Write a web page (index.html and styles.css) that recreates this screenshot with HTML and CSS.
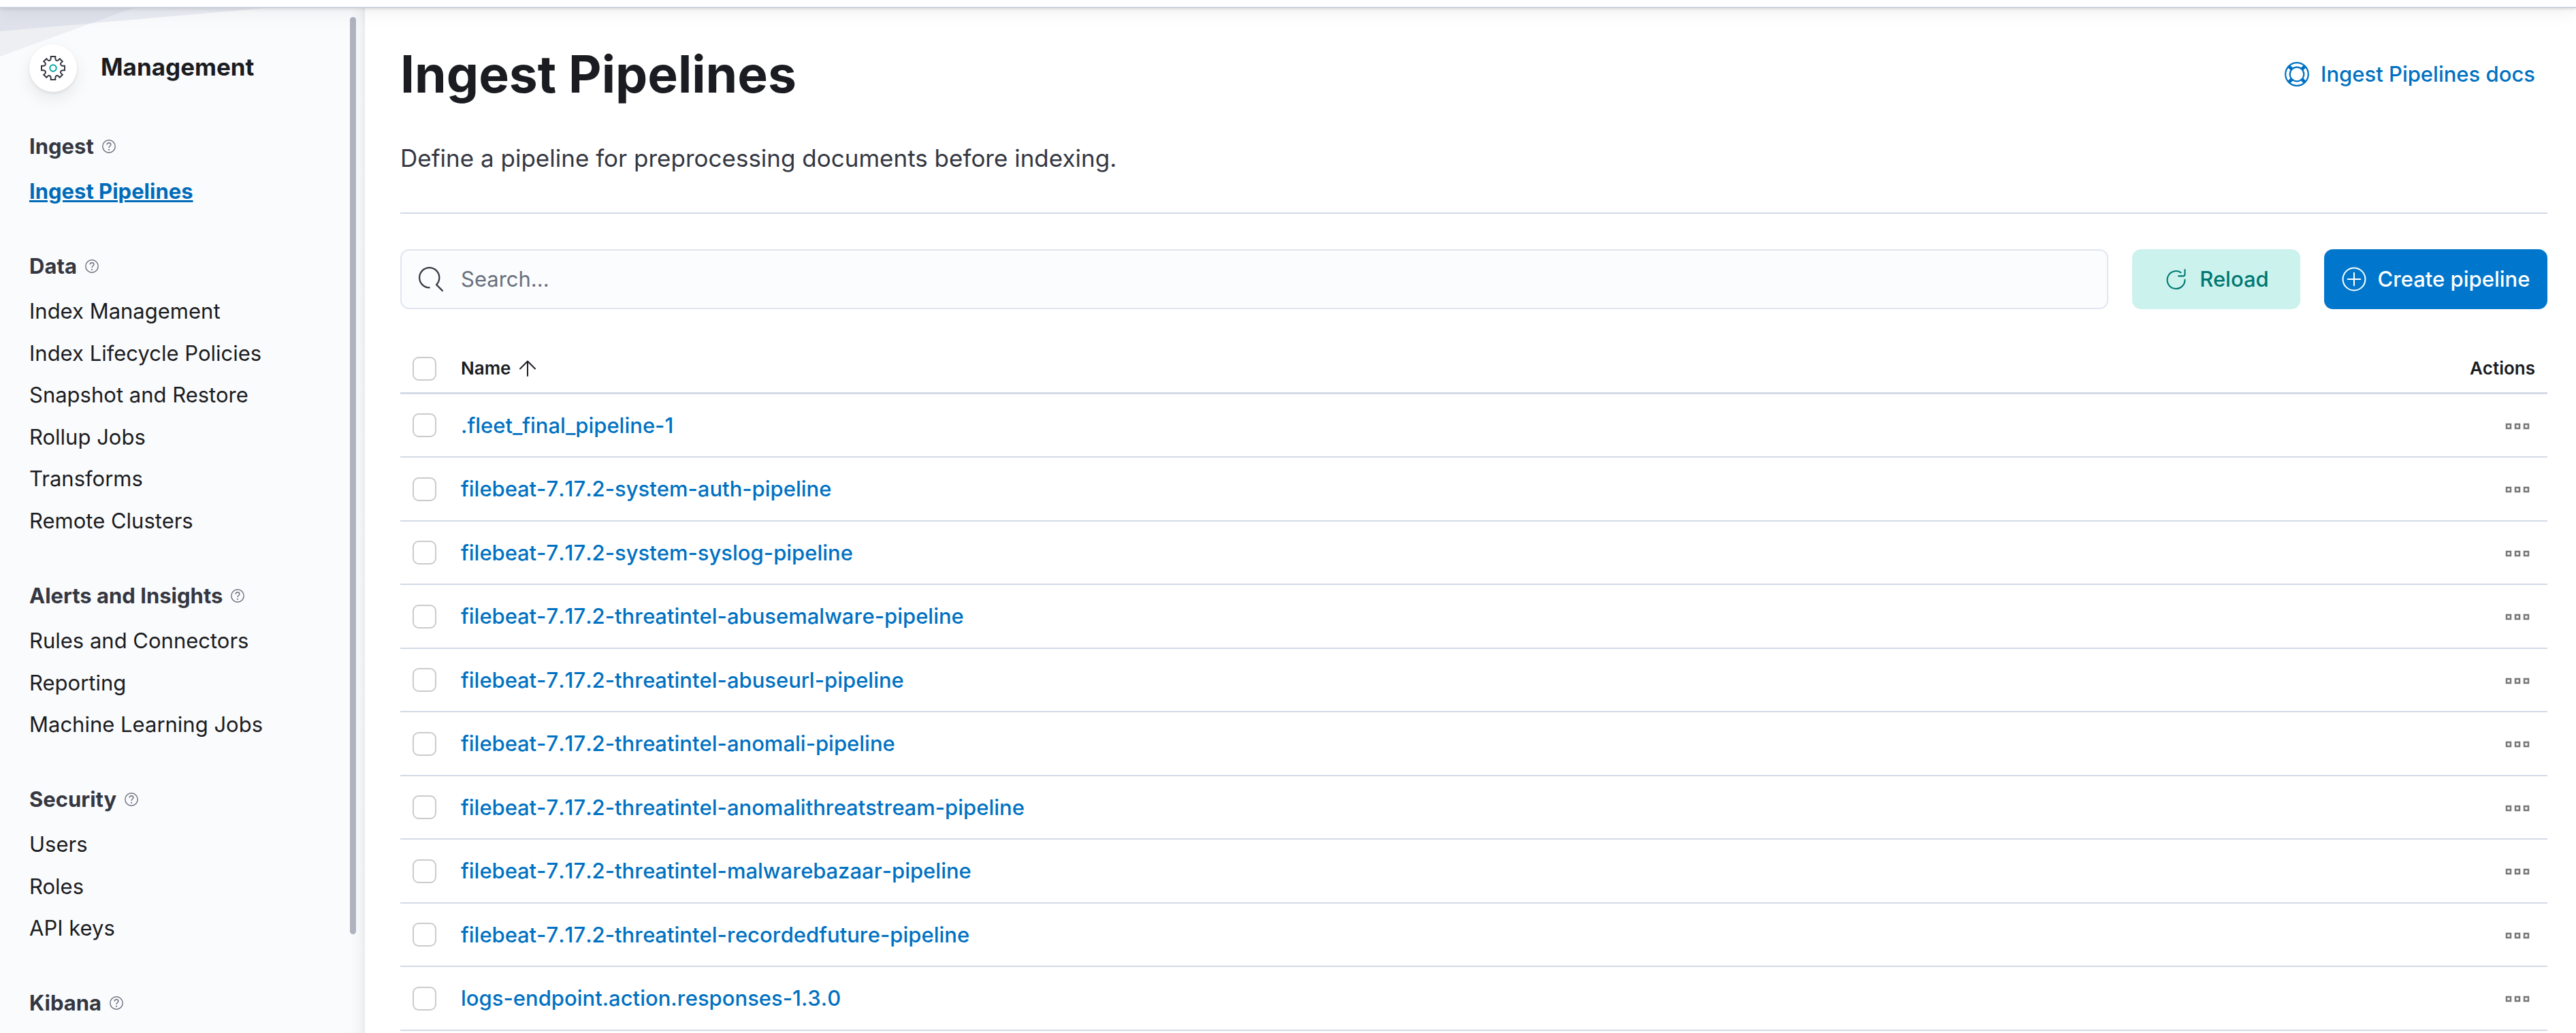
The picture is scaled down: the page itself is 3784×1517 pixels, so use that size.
FILE: index.html
```html
<!DOCTYPE html>
<html lang="en">
<head>
<meta charset="utf-8">
<title>Ingest Pipelines</title>
<link rel="stylesheet" href="styles.css">
</head>
<body>
<svg class="sprite" aria-hidden="true">
  <symbol id="help" viewBox="0 0 20 20"><circle cx="10" cy="10" r="9.2" fill="none" stroke="currentColor" stroke-width="1.4"/><path d="M7.2 7.6C7.2 5.8 8.4 4.8 10 4.8s2.8 1 2.8 2.6c0 2-2.8 2.2-2.8 4.6" fill="none" stroke="currentColor" stroke-width="1.5"/><circle cx="10" cy="14.8" r="1.1" fill="currentColor"/></symbol>
  <symbol id="dots" viewBox="0 0 36 36"><path d="M2 15h6v6H2zM15 15h6v6h-6zM28 15h6v6h-6z" fill="none" stroke="currentColor" stroke-width="2.5"/></symbol>
</svg>
<header class="topbar"></header>
<div class="page">
  <aside class="sidebar">
    <svg class="deco" viewBox="0 0 400 80" aria-hidden="true"><path d="M0 0H195L0 71z" fill="#98a2b3" fill-opacity=".13"/><path d="M0 0H388L0 34z" fill="#98a9c3" fill-opacity=".17"/></svg>
    <div class="brand">
      <span class="badge"><svg class="icon" viewBox="-18 -18 36 36" fill="none" stroke-width="2"><path stroke="#343741" d="M-3.3-17H3.3V-14Q3.5-11.6 5.5-11Q6.8-10.8 7.6-11.6L9.7-13.8L13.8-9.7L11.6-7.6Q10.8-6.8 11-5.5Q11.6-3.5 14-3.3H17V3.3H14Q11.6 3.5 11 5.5Q10.8 6.8 11.6 7.6L13.8 9.7L9.7 13.8L7.6 11.6Q6.8 10.8 5.5 11Q3.5 11.6 3.3 14V17H-3.3V14Q-3.5 11.6-5.5 11Q-6.8 10.8-7.6 11.6L-9.7 13.8L-13.8 9.7L-11.6 7.6Q-10.8 6.8-11 5.5Q-11.6 3.5-14 3.3H-17V-3.3H-14Q-11.6-3.5-11-5.5Q-10.8-6.8-11.6-7.6L-13.8-9.7L-9.7-13.8L-7.6-11.6Q-6.8-10.8-5.5-11Q-3.5-11.6-3.3-14Z"/><circle r="4.7" stroke="#00a69b"/></svg></span>
      <h2 class="brand-name">Management</h2>
    </div>
    <nav class="nav">
      <section>
        <h3 class="nav-title">Ingest <svg class="help"><use href="#help"/></svg></h3>
        <ul><li><a class="current" href="#">Ingest Pipelines</a></li></ul>
      </section>
      <section>
        <h3 class="nav-title">Data <svg class="help"><use href="#help"/></svg></h3>
        <ul>
          <li><a href="#">Index Management</a></li>
          <li><a href="#">Index Lifecycle Policies</a></li>
          <li><a href="#">Snapshot and Restore</a></li>
          <li><a href="#">Rollup Jobs</a></li>
          <li><a href="#">Transforms</a></li>
          <li><a href="#">Remote Clusters</a></li>
        </ul>
      </section>
      <section>
        <h3 class="nav-title">Alerts and Insights <svg class="help"><use href="#help"/></svg></h3>
        <ul>
          <li><a href="#">Rules and Connectors</a></li>
          <li><a href="#">Reporting</a></li>
          <li><a href="#">Machine Learning Jobs</a></li>
        </ul>
      </section>
      <section>
        <h3 class="nav-title">Security <svg class="help"><use href="#help"/></svg></h3>
        <ul>
          <li><a href="#">Users</a></li>
          <li><a href="#">Roles</a></li>
          <li><a href="#">API keys</a></li>
        </ul>
      </section>
      <section>
        <h3 class="nav-title">Kibana <svg class="help"><use href="#help"/></svg></h3>
      </section>
    </nav>
    <div class="scroll-thumb"></div>
  </aside>
  <main class="main">
    <div class="heading">
      <h1>Ingest Pipelines</h1>
      <a class="docs" href="#"><svg class="icon" viewBox="0 0 36 36" fill="none" stroke="currentColor"><circle cx="18" cy="18" r="16.8" stroke-width="2.2"/><circle cx="18" cy="18" r="10.3" stroke-width="2.2"/><path d="M6.5 6.5l4 4M29.5 6.5l-4 4M6.5 29.5l4-4M29.5 29.5l-4-4" stroke-width="5"/></svg>Ingest Pipelines docs</a>
    </div>
    <p class="lead">Define a pipeline for preprocessing documents before indexing.</p>
    <div class="toolbar">
      <label class="search">
        <svg class="icon" viewBox="0 0 16 16"><path fill="currentColor" d="M11.271 11.978l3.872 3.873a.502.502 0 00.708 0 .502.502 0 000-.708l-3.565-3.564c2.38-2.747 2.267-6.923-.342-9.532-2.73-2.73-7.17-2.73-9.898 0-2.728 2.729-2.728 7.17 0 9.9a6.955 6.955 0 004.949 2.05.5.5 0 000-1 5.96 5.96 0 01-4.242-1.757 6.01 6.01 0 010-8.486 6.004 6.004 0 018.484 0 6.01 6.01 0 010 8.486.5.5 0 00.034.738z"/></svg>
        <input type="search" placeholder="Search..." aria-label="Search">
      </label>
      <button class="btn reload" type="button"><svg class="icon" viewBox="0 0 35 35" fill="none" stroke="currentColor" stroke-width="2" stroke-linecap="round" stroke-linejoin="round"><path d="M24.8 7.9A12.6 12.6 0 1 0 30.6 18.2M30.6 4v6.5q0 2.5-2.5 2.5H21.5"/></svg>Reload</button>
      <button class="btn create" type="button"><svg class="icon" viewBox="0 0 35 35" fill="none" stroke="currentColor" stroke-width="2" stroke-linecap="round"><circle cx="17.5" cy="17.5" r="16"/><path d="M17.5 8.500v18M8.500 17.500h18"/></svg>Create pipeline</button>
    </div>
    <table class="table">
      <thead>
        <tr><th class="check"><input type="checkbox" aria-label="Select all rows"></th><th class="name" aria-sort="ascending"><button class="sort" type="button">Name <svg class="arrow" viewBox="0 0 26 26" fill="none" stroke="currentColor" stroke-width="2" stroke-linecap="round" stroke-linejoin="round"><path d="M13 24V3M2 13.500L13 2.500L24 13.500"/></svg></button></th><th class="actions">Actions</th></tr>
      </thead>
      <tbody>
        <tr><td class="check"><input type="checkbox" aria-label="Select .fleet_final_pipeline-1"></td><td class="name"><a href="#">.fleet_final_pipeline-1</a></td><td class="actions"><button class="more" type="button" aria-label="All actions"><svg class="icon"><use href="#dots"/></svg></button></td></tr>
        <tr><td class="check"><input type="checkbox" aria-label="Select filebeat-7.17.2-system-auth-pipeline"></td><td class="name"><a href="#">filebeat-7.17.2-system-auth-pipeline</a></td><td class="actions"><button class="more" type="button" aria-label="All actions"><svg class="icon"><use href="#dots"/></svg></button></td></tr>
        <tr><td class="check"><input type="checkbox" aria-label="Select filebeat-7.17.2-system-syslog-pipeline"></td><td class="name"><a href="#">filebeat-7.17.2-system-syslog-pipeline</a></td><td class="actions"><button class="more" type="button" aria-label="All actions"><svg class="icon"><use href="#dots"/></svg></button></td></tr>
        <tr><td class="check"><input type="checkbox" aria-label="Select filebeat-7.17.2-threatintel-abusemalware-pipeline"></td><td class="name"><a href="#">filebeat-7.17.2-threatintel-abusemalware-pipeline</a></td><td class="actions"><button class="more" type="button" aria-label="All actions"><svg class="icon"><use href="#dots"/></svg></button></td></tr>
        <tr><td class="check"><input type="checkbox" aria-label="Select filebeat-7.17.2-threatintel-abuseurl-pipeline"></td><td class="name"><a href="#">filebeat-7.17.2-threatintel-abuseurl-pipeline</a></td><td class="actions"><button class="more" type="button" aria-label="All actions"><svg class="icon"><use href="#dots"/></svg></button></td></tr>
        <tr><td class="check"><input type="checkbox" aria-label="Select filebeat-7.17.2-threatintel-anomali-pipeline"></td><td class="name"><a href="#">filebeat-7.17.2-threatintel-anomali-pipeline</a></td><td class="actions"><button class="more" type="button" aria-label="All actions"><svg class="icon"><use href="#dots"/></svg></button></td></tr>
        <tr><td class="check"><input type="checkbox" aria-label="Select filebeat-7.17.2-threatintel-anomalithreatstream-pipeline"></td><td class="name"><a href="#">filebeat-7.17.2-threatintel-anomalithreatstream-pipeline</a></td><td class="actions"><button class="more" type="button" aria-label="All actions"><svg class="icon"><use href="#dots"/></svg></button></td></tr>
        <tr><td class="check"><input type="checkbox" aria-label="Select filebeat-7.17.2-threatintel-malwarebazaar-pipeline"></td><td class="name"><a href="#">filebeat-7.17.2-threatintel-malwarebazaar-pipeline</a></td><td class="actions"><button class="more" type="button" aria-label="All actions"><svg class="icon"><use href="#dots"/></svg></button></td></tr>
        <tr><td class="check"><input type="checkbox" aria-label="Select filebeat-7.17.2-threatintel-recordedfuture-pipeline"></td><td class="name"><a href="#">filebeat-7.17.2-threatintel-recordedfuture-pipeline</a></td><td class="actions"><button class="more" type="button" aria-label="All actions"><svg class="icon"><use href="#dots"/></svg></button></td></tr>
        <tr><td class="check"><input type="checkbox" aria-label="Select logs-endpoint.action.responses-1.3.0"></td><td class="name"><a href="#">logs-endpoint.action.responses-1.3.0</a></td><td class="actions"><button class="more" type="button" aria-label="All actions"><svg class="icon"><use href="#dots"/></svg></button></td></tr>
      </tbody>
    </table>
  </main>
</div>
</body>
</html>
```
FILE: styles.css
```css
* { box-sizing: border-box; }
body {
  margin: 0;
  height: 100vh;
  display: flex;
  flex-direction: column;
  overflow: hidden;
  background: #fff;
  color: #343741;
  font: 400 31px/44px Inter, "Liberation Sans", sans-serif;
}
h1, h2, h3, p, ul { margin: 0; padding: 0; }
ul { list-style: none; }
a { color: #0071c2; text-decoration: none; }
button, input { font: inherit; color: inherit; }
button { border: 0; background: none; padding: 0; }
.sprite { display: none; }
.icon { width: 36px; height: 36px; flex: none; display: block; }

.topbar {
  flex: none;
  height: 12px;
  background: #fff;
  border-bottom: 2px solid #cdd3df;
  box-shadow: 0 2px 4px rgba(0, 0, 0, .1), 0 6px 24px rgba(0, 0, 0, .08);
  position: relative;
  z-index: 2;
}
.page { flex: 1; min-height: 0; display: flex; }

/* Sidebar */
.sidebar {
  position: relative;
  flex: none;
  width: 536px;
  padding: 53px 43px 0;
  overflow: hidden;
  background: linear-gradient(to left, #e8eaed, #f3f4f6 6px, #fafbfd 20px);
}
.deco { position: absolute; top: 0; left: 0; width: 400px; height: 80px; }
.brand { position: relative; display: flex; align-items: center; gap: 35px; }
.badge {
  width: 70px;
  height: 70px;
  border-radius: 50%;
  background: #fff;
  display: grid;
  place-items: center;
  box-shadow: 0 2px 4px rgba(0, 0, 0, .08), 0 10px 24px rgba(0, 0, 0, .08);
}
.brand-name { font-size: 35px; font-weight: 700; color: #1a1c21; padding-bottom: 4px; }
.nav { display: flex; flex-direction: column; gap: 66px; padding-top: 58px; }
.nav-title { display: flex; align-items: center; gap: 12px; font-size: 31px; font-weight: 700; padding-bottom: 22px; }
.help { width: 20px; height: 20px; color: #69707d; }
.nav li + li { margin-top: 18px; }
.nav li:nth-child(odd):not(:first-child) { margin-top: 17px; }
.nav a { display: block; color: #1a1c21; }
.nav .current { color: #006bb8; font-weight: 700; text-decoration: underline; text-decoration-thickness: 3px; }
.scroll-thumb {
  position: absolute;
  top: 13px;
  right: 13px;
  bottom: 145px;
  width: 9px;
  border-radius: 5px;
  background: #afb3bd;
}

/* Main */
.main { flex: 1; min-width: 0; padding: 53px 42px 0 52px; }
.heading { display: flex; justify-content: space-between; align-items: center; padding-right: 18px; }
h1 { font-size: 75px; line-height: 88px; font-weight: 700; color: #1a1c21; }
.docs { display: flex; align-items: center; gap: 17px; font-weight: 500; }
.lead { font-size: 35px; line-height: 52px; padding: 53px 0 54px; border-bottom: 2px solid #d3dae6; }
.toolbar { display: flex; gap: 35px; padding-top: 52px; }
.search {
  flex: 1;
  height: 88px;
  display: flex;
  align-items: center;
  gap: 26px;
  padding: 0 25px;
  border: 2px solid #e2e5f0;
  border-radius: 13px;
  background: #fbfcfd;
}
.search input { flex: 1; min-width: 0; border: 0; padding: 0; background: none; outline: 0; }
.search input::placeholder { color: #69707d; opacity: 1; }
.btn { height: 88px; border-radius: 13px; display: flex; align-items: center; justify-content: center; gap: 17px; font-weight: 500; }
.reload { width: 247px; background: #ccf2ee; color: #007871; }
.create { width: 328px; background: #0077cc; color: #fff; }

.table { width: 100%; margin-top: 52px; border-collapse: separate; border-spacing: 0; text-align: left; font-kerning: none; }
th, td { padding: 0; border-bottom: 2px solid #d3dae6; height: 93px; vertical-align: middle; }
tr:nth-child(even) td { height: 94px; }
th { height: 73px; border-bottom-width: 3px; font-size: 26px; font-weight: 600; color: #1a1c21; }
.check { width: 89px; padding-left: 18px; }
.check input {
  appearance: none;
  display: block;
  width: 35px;
  height: 35px;
  margin: 0;
  border: 2px solid #c9cbcd;
  border-radius: 9px;
  background: #fff;
}
.name a { font-weight: 500; }
.sort { display: flex; align-items: center; gap: 12px; font-weight: 600; }
.arrow { width: 26px; height: 26px; }
.actions { width: 264px; text-align: right; padding-right: 18px; }
.more { display: block; margin: 2px 8px 0 auto; color: #777; }
```
